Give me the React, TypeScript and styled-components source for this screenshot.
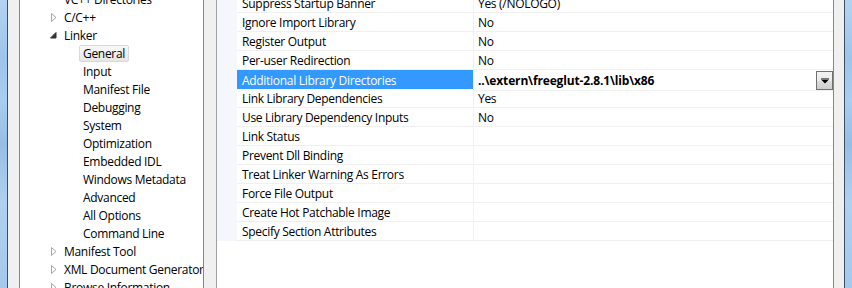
import React, { FC } from 'react';
import styled, { createGlobalStyle } from 'styled-components';

const GlobalStyle = createGlobalStyle`
  html, body {
    margin: 0;
    padding: 0;
    background: #f0f0f0;
    overflow: hidden;
  }
  * {
    box-sizing: border-box;
  }
`;

const FONT = `"Segoe UI", "Open Sans", "Noto Sans", sans-serif`;

const Window = styled.div`
  display: flex;
  flex-direction: row;
  width: 852px;
  height: 288px;
  overflow: hidden;
  font-family: ${FONT};
  font-size: 12px;
  letter-spacing: -0.3px;
  color: #000;
`;

const Frame = styled.div<{ $side: 'left' | 'right' }>`
  width: ${(p) => (p.$side === 'left' ? 8 : 7)}px;
  flex-shrink: 0;
  background: linear-gradient(
    180deg,
    #b4d3f2 0%,
    #9fc4ea 20%,
    #a9cdf0 35%,
    #98bde4 50%,
    #b0d0f0 70%,
    #a4c8ec 100%
  );
  ${(p) => (p.$side === 'left' ? 'border-right: 1px solid #3e4e62;' : '')}
`;

const Gutter = styled.div<{ $w: number; $line?: string }>`
  width: ${(p) => p.$w}px;
  flex-shrink: 0;
  background: #f0f0f0;
  border-right: 1px solid ${(p) => p.$line || '#828790'};
`;

const TreePanel = styled.div`
  width: 184px;
  flex-shrink: 0;
  background: #fff;
  border-right: 1px solid #828790;
  overflow: hidden;
`;

const TreeList = styled.ul`
  list-style: none;
  margin: -10px 0 0 0;
  padding: 0;
`;

const TreeRow = styled.li<{ $level: number }>`
  height: 18px;
  display: flex;
  align-items: center;
  padding-left: ${(p) => (p.$level === 1 ? 27 : 59)}px;
  white-space: nowrap;
`;

const Expander = styled.span`
  width: 13px;
  flex-shrink: 0;
  display: inline-flex;
  align-items: center;
  justify-content: center;
  svg {
    display: block;
  }
`;

const TreeLabel = styled.span<{ $selected?: boolean }>`
  padding: 0 3px;
  line-height: 15px;
  border: 1px solid ${(p) => (p.$selected ? '#d9d9d9' : 'transparent')};
  border-radius: 2px;
  background: ${(p) => (p.$selected ? 'linear-gradient(180deg, #f8f8f8 0%, #e6e6e6 100%)' : 'transparent')};
`;

const Grid = styled.div`
  flex: 1;
  background: #fff;
  border-right: 1px solid #828790;
  overflow: hidden;
  display: flex;
  flex-direction: column;
`;

const Rows = styled.div`
  margin-top: -6px;
`;

const Row = styled.div`
  display: grid;
  grid-template-columns: 20px 237px 1fr;
  height: 19px;
`;

const RowGutter = styled.div`
  background: #f4f7fc;
`;

const NameCell = styled.div<{ $selected?: boolean }>`
  padding-left: 5px;
  display: flex;
  align-items: center;
  border-bottom: 1px solid ${(p) => (p.$selected ? '#3399ff' : '#f0f0f0')};
  border-right: 1px solid #f0f0f0;
  background: ${(p) => (p.$selected ? '#3399ff' : '#fff')};
  color: ${(p) => (p.$selected ? '#fff' : '#000')};
  white-space: nowrap;
`;

const ValueCell = styled.div<{ $bold?: boolean }>`
  padding-left: 4px;
  display: flex;
  align-items: center;
  justify-content: space-between;
  border-bottom: 1px solid #f0f0f0;
  font-weight: ${(p) => (p.$bold ? 700 : 400)};
  letter-spacing: ${(p) => (p.$bold ? '-0.15px' : '-0.3px')};
  white-space: nowrap;
`;

const DropButton = styled.div`
  width: 17px;
  height: 19px;
  margin-top: 1px;
  border: 1px solid #707070;
  background: linear-gradient(180deg, #f2f2f2 0%, #ebebeb 50%, #dddddd 51%, #cfcfcf 100%);
  display: flex;
  align-items: center;
  justify-content: center;
`;

const tree: { label: string; level: number; state?: 'open' | 'closed'; selected?: boolean }[] = [
  { label: 'VC++ Directories', level: 1 },
  { label: 'C/C++', level: 1, state: 'closed' },
  { label: 'Linker', level: 1, state: 'open' },
  { label: 'General', level: 2, selected: true },
  { label: 'Input', level: 2 },
  { label: 'Manifest File', level: 2 },
  { label: 'Debugging', level: 2 },
  { label: 'System', level: 2 },
  { label: 'Optimization', level: 2 },
  { label: 'Embedded IDL', level: 2 },
  { label: 'Windows Metadata', level: 2 },
  { label: 'Advanced', level: 2 },
  { label: 'All Options', level: 2 },
  { label: 'Command Line', level: 2 },
  { label: 'Manifest Tool', level: 1, state: 'closed' },
  { label: 'XML Document Generator', level: 1, state: 'closed' },
  { label: 'Browse Information', level: 1, state: 'closed' },
];

const props: { name: string; value?: string; selected?: boolean }[] = [
  { name: 'Suppress Startup Banner', value: 'Yes (/NOLOGO)' },
  { name: 'Ignore Import Library', value: 'No' },
  { name: 'Register Output', value: 'No' },
  { name: 'Per-user Redirection', value: 'No' },
  { name: 'Additional Library Directories', value: '..\\extern\\freeglut-2.8.1\\lib\\x86', selected: true },
  { name: 'Link Library Dependencies', value: 'Yes' },
  { name: 'Use Library Dependency Inputs', value: 'No' },
  { name: 'Link Status' },
  { name: 'Prevent Dll Binding' },
  { name: 'Treat Linker Warning As Errors' },
  { name: 'Force File Output' },
  { name: 'Create Hot Patchable Image' },
  { name: 'Specify Section Attributes' },
];

const Glyph: FC<{ state?: 'open' | 'closed' }> = ({ state }) => {
  if (state === 'closed') {
    return (
      <svg width="6" height="9" viewBox="0 0 6 9">
        <path d="M0.5 0.5 L5 4.5 L0.5 8.5 Z" fill="#fff" stroke="#a6a6a6" strokeWidth="1" />
      </svg>
    );
  }
  if (state === 'open') {
    return (
      <svg width="7" height="7" viewBox="0 0 7 7">
        <path d="M6 0.5 L6 6 L0.5 6 Z" fill="#333" stroke="#333" strokeWidth="1" />
      </svg>
    );
  }
  return null;
};

const App: FC = () => {
  return (
    <>
      <GlobalStyle />
      <Window>
        <Frame $side="left" />
        <Gutter $w={12} />
        <TreePanel>
          <TreeList>
            {tree.map((item) => (
              <TreeRow key={item.label} $level={item.level}>
                {item.level === 1 && (
                  <Expander>
                    <Glyph state={item.state} />
                  </Expander>
                )}
                <TreeLabel $selected={item.selected}>{item.label}</TreeLabel>
              </TreeRow>
            ))}
          </TreeList>
        </TreePanel>
        <Gutter $w={13} $line="#a0a0a0" />
        <Grid>
          <Rows>
            {props.map((p) => (
              <Row key={p.name}>
                <RowGutter />
                <NameCell $selected={p.selected}>{p.name}</NameCell>
                <ValueCell $bold={p.selected}>
                  {p.value}
                  {p.selected && (
                    <DropButton>
                      <svg width="8" height="6" viewBox="0 0 8 6">
                        <path d="M0 1 H8" stroke="#000" strokeWidth="1" />
                        <path d="M0.5 2 L7.5 2 L4 5.5 Z" fill="#000" />
                      </svg>
                    </DropButton>
                  )}
                </ValueCell>
              </Row>
            ))}
          </Rows>
        </Grid>
        <Gutter $w={11} $line="#3e4e62" />
        <Frame $side="right" />
      </Window>
    </>
  );
};

export default App;
